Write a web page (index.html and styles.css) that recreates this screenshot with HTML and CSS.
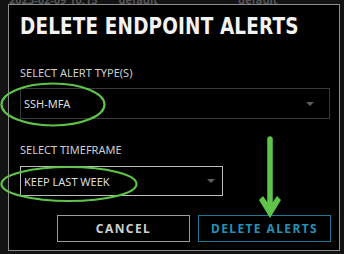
FILE: index.html
```html
<!DOCTYPE html>
<html>
<head>
<meta charset="utf-8">
<link rel="stylesheet" href="styles.css">
</head>
<body>
<div class="bgrow">
  <span class="bg-date">2023-02-09 10:15</span>
  <span class="bg-def1">default</span>
  <span class="bg-def2">default</span>
</div>
<div class="modal">
  <h1 class="title">DELETE ENDPOINT ALERTS</h1>
  <div class="label label-first">SELECT ALERT TYPE(S)</div>
  <div class="select select-type">
    <span class="select-text">SSH-MFA</span>
    <span class="caret"></span>
  </div>
  <div class="label label-second">SELECT TIMEFRAME</div>
  <div class="select select-time">
    <span class="select-text">KEEP LAST WEEK</span>
    <span class="caret"></span>
  </div>
  <div class="actions">
    <button class="btn btn-cancel">CANCEL</button>
    <button class="btn btn-delete">DELETE ALERTS</button>
  </div>
</div>
<svg class="annot" width="344" height="254" viewBox="0 0 344 254">
  <ellipse cx="53" cy="104.5" rx="51.5" ry="21" fill="none" stroke="#5fc44a" stroke-width="2.2"/>
  <ellipse cx="69" cy="184" rx="67.5" ry="17" fill="none" stroke="#5fc44a" stroke-width="2.2"/>
  <line x1="270" y1="139" x2="270" y2="212" stroke="#5fc44a" stroke-width="5.5" stroke-linecap="round"/>
  <polygon points="259,200 263,196 270,206 277,196 281,200 270,218" fill="#5fc44a"/>
</svg>
</body>
</html>
```

FILE: styles.css
```css
html, body {
  margin: 0;
  padding: 0;
}
body {
  background: #131313;
  width: 344px;
  height: 254px;
  overflow: hidden;
  position: relative;
  font-family: "Noto Sans", "DejaVu Sans", sans-serif;
}
.bgrow {
  height: 4px;
  overflow: hidden;
  display: flex;
  align-items: flex-end;
  font-size: 11px;
  line-height: 9px;
  color: #555;
  font-weight: bold;
}
.bg-date { margin-left: 9px; }
.bg-def1 { margin-left: 21px; }
.bg-def2 { margin-left: 80px; }
.modal {
  margin-left: 8px;
  width: 332px;
  height: 247px;
  box-sizing: border-box;
  border: 1px solid #8c8c8c;
  background: #000;
  padding: 7px 10px 0 11px;
}
.title {
  margin: 0;
  font-family: "Liberation Sans Narrow", "DejaVu Sans Condensed", "Liberation Sans", sans-serif;
  font-weight: bold;
  font-size: 23.5px;
  line-height: 28px;
  color: #f2f2f2;
  letter-spacing: 0.2px;
  white-space: nowrap;
  transform: scaleX(0.87);
  transform-origin: left center;
}
.label {
  font-size: 11px;
  line-height: 15px;
  color: #cfcfcf;
}
.label-first { margin-top: 25px; }
.label-second { margin-top: 23px; }
.select {
  display: flex;
  align-items: center;
  justify-content: space-between;
  box-sizing: border-box;
  padding-left: 3px;
}
.select-type {
  margin-top: 8px;
  width: 310px;
  height: 31px;
  border: 1px solid #3a3a3a;
  padding-right: 15px;
}
.select-time {
  margin-top: 9px;
  width: 203px;
  height: 30px;
  border: 1px solid #bdbdbd;
  padding-right: 7px;
}
.select-text {
  font-size: 11px;
  color: #dedede;
}
.caret {
  width: 0;
  height: 0;
  border-left: 4.5px solid transparent;
  border-right: 4.5px solid transparent;
  border-top: 4.5px solid #5e5e5e;
}
.actions {
  margin-top: 19px;
  margin-right: -2px;
  display: flex;
  justify-content: flex-end;
  gap: 8px;
}
.btn {
  width: 133px;
  height: 27px;
  box-sizing: border-box;
  background: #000;
  font-family: "Noto Sans", "DejaVu Sans", sans-serif;
  font-weight: bold;
  font-size: 12px;
  letter-spacing: 1.4px;
  padding: 0;
}
.btn-cancel {
  border: 1px solid #9a9a9a;
  color: #cfcfcf;
}
.btn-delete {
  border: 1px solid #1b7896;
  color: #2691b6;
}
.annot {
  position: absolute;
  left: 0;
  top: 0;
  pointer-events: none;
}
```
